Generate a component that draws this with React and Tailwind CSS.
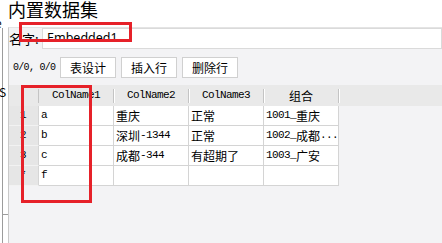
const rows = [
  { n: '1', c1: 'a', c2: '重庆', c3: '正常', c4: '1001_重庆' },
  { n: '2', c1: 'b', c2: '深圳-1344', c3: '正常', c4: '1002_成都...' },
  { n: '3', c1: 'c', c2: '成都-344', c3: '有超期了', c4: '1003_广安' },
  { n: '*', c1: 'f', c2: '', c3: '', c4: '' },
];

const cols = ['ColName1', 'ColName2', 'ColName3', '组合'];

// ascii runs get the narrow mono face, the rest the CJK face
const Mixed = ({ text }) =>
  text
    .split(/([\x00-\x7f]+)/)
    .filter(Boolean)
    .map((s, i) =>
      /^[\x00-\x7f]+$/.test(s) ? (
        <span key={i} className="font-['Liberation_Mono',monospace] text-[11px] tracking-[-0.6px]">
          {s}
        </span>
      ) : (
        <span key={i} className="font-['Noto_Sans_CJK_SC',sans-serif] text-[12px]">
          {s}
        </span>
      )
    );

const Button = ({ label }) => (
  <div className="flex h-[21px] w-[56px] items-center justify-center border border-[#d0d0d0] bg-white text-[12px] leading-none text-black">
    {label}
  </div>
);

export default function App() {
  return (
    <div className="relative flex h-[243px] w-[442px] overflow-hidden bg-white font-['Noto_Sans_CJK_SC',sans-serif] text-black">
      {/* clipped neighbour pane on the left */}
      <div className="flex w-[8px] flex-none flex-col overflow-hidden">
        <div className="h-[28px] pt-[17px] text-[12px] leading-none">
          <span className="-ml-[5px] block">e</span>
        </div>
        <div className="ml-[2px] flex-1 border-l border-[#9c9c9c]">
          <div className="-ml-[4px] mt-[58px] text-[12px] leading-none">S</div>
          <div className="mt-[116px] w-[8px] border-t border-[#9c9c9c]" />
        </div>
      </div>

      <div className="flex min-w-0 flex-1 flex-col">
        <div className="h-[27px] text-[18px] leading-[18px]">内置数据集</div>

        <div className="flex flex-1 flex-col border-l border-t border-[#c9c9c9] border-t-[#e4e4e4] bg-[#f3f3f5]">
          {/* name row */}
          <div className="flex h-[21px] items-center">
            <div className="w-[33px] text-[13px] leading-none">名字:</div>
            <div className="flex h-[21px] flex-1 items-center border border-[#dadada] bg-white pl-[4px] font-['Noto_Sans',sans-serif] text-[12.5px] leading-none">
              Embedded1
            </div>
          </div>

          {/* toolbar */}
          <div className="mt-[8px] flex h-[21px] items-center">
            <div className="w-[51px] pl-[4px] font-['Liberation_Mono',monospace] text-[10px] tracking-[-0.7px] leading-none">
              0/0, 0/0
            </div>
            <div className="flex gap-[5px]">
              <Button label="表设计" />
              <Button label="插入行" />
              <Button label="删除行" />
            </div>
          </div>

          {/* grid */}
          <div className="mt-[7px] flex flex-col">
            <div className="flex h-[21px] bg-[#e9e9e9]">
              <div className="flex w-[30px] items-center justify-end">
                <div className="h-[14px] w-px bg-[#c4c4c4]" />
              </div>
              {cols.map((c) => (
                <div key={c} className="flex w-[75px] items-center">
                  <div className="flex flex-1 justify-center leading-none">
                    <Mixed text={c} />
                  </div>
                  <div className="h-[14px] w-px bg-[#c4c4c4] shadow-[1px_0_0_#ffffff]" />
                </div>
              ))}
            </div>

            {rows.map((r) => (
              <div key={r.n} className="flex h-[20px]">
                <div className="flex w-[30px] items-center border-b border-r border-[#d6d6d6] border-b-[#f2f2f2] bg-[#e6e6e6] pl-[11px] font-['Liberation_Mono',monospace] text-[11px] leading-none">
                  {r.n}
                </div>
                {[r.c1, r.c2, r.c3, r.c4].map((v, i) => (
                  <div
                    key={i}
                    className="flex w-[75px] items-center overflow-hidden whitespace-nowrap border-b border-r border-[#d4d4d4] bg-white pl-[2px] leading-none"
                  >
                    <Mixed text={v} />
                  </div>
                ))}
              </div>
            ))}
          </div>
        </div>
      </div>

      {/* red annotation boxes drawn over the screenshot */}
      <div className="absolute left-[19px] top-[22px] h-[20px] w-[113px] border-[3px] border-[#e62129]" />
      <div className="absolute left-[21px] top-[85px] h-[118px] w-[71px] border-[3px] border-[#e62129]" />
    </div>
  );
}
